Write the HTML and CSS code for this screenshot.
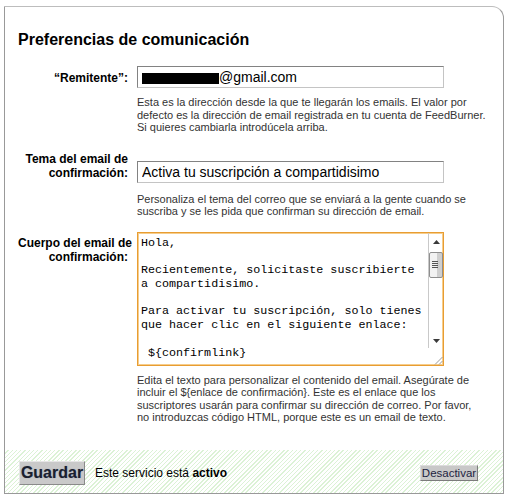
FILE: index.html
```html
<!DOCTYPE html>
<html lang="es">
<head>
  <meta charset="UTF-8">
  <meta name="viewport" content="width=device-width, initial-scale=1.0">
  <title>Preferencias de comunicación</title>
  <link rel="stylesheet" href="styles.css">
</head>
<body>
  <div class="panel">
    <div class="panel-body">
      <h2 class="title">Preferencias de comunicación</h2>

      <div class="row row-sender">
        <div class="lbl">“Remitente”:</div>
        <div class="fld">
          <div class="field"><span class="redacted"></span>@gmail.com</div>
          <p class="help">Esta es la dirección desde la que te llegarán los emails. El valor por defecto es la dirección de email registrada en tu cuenta de FeedBurner.<br>Si quieres cambiarla introdúcela arriba.</p>
        </div>
      </div>

      <div class="row row-subject">
        <div class="lbl">Tema del email de<br>confirmación:</div>
        <div class="fld">
          <input class="field" type="text" value="Activa tu suscripción a compartidisimo">
          <p class="help">Personaliza el tema del correo que se enviará a la gente cuando se suscriba y se les pida que confirman su dirección de email.</p>
        </div>
      </div>

      <div class="row row-body">
        <div class="lbl">Cuerpo del email de<br>confirmación:</div>
        <div class="fld">
          <div class="body-box">
            <textarea class="body-text">Hola,

Recientemente, solicitaste suscribierte
a compartidisimo.

Para activar tu suscripción, solo tienes
que hacer clic en el siguiente enlace:

 ${confirmlink}</textarea>
            <div class="vscroll">
              <div class="sb-track">
                <div class="sb-arrow">
                  <svg width="7" height="4" viewBox="0 0 7 4"><polygon points="3.5,0 7,4 0,4" fill="#3a3a3a"/></svg>
                </div>
                <div class="sb-thumb">
                  <span></span><span></span><span></span><span></span>
                </div>
                <div class="sb-arrow sb-down">
                  <svg width="7" height="4" viewBox="0 0 7 4"><polygon points="0,0 7,0 3.5,4" fill="#3a3a3a"/></svg>
                </div>
              </div>
              <div class="sb-corner">
                <svg width="9" height="9" viewBox="0 0 9 9">
                  <line x1="8.5" y1="1" x2="1" y2="8.5" stroke="#9a9a9a"/>
                  <line x1="8.5" y1="5" x2="5" y2="8.5" stroke="#9a9a9a"/>
                </svg>
              </div>
            </div>
          </div>
          <p class="help">Edita el texto para personalizar el contenido del email. Asegúrate de incluir el ${enlace de confirmación}. Este es el enlace que los suscriptores usarán para confirmar su dirección de correo. Por favor, no introduzcas código HTML, porque este es un email de texto.</p>
        </div>
      </div>
    </div>

    <div class="panel-foot">
      <button class="btn-save" type="button">Guardar</button>
      <span class="status">Este servicio está <b>activo</b></span>
      <button class="btn-off" type="button">Desactivar</button>
    </div>
  </div>
</body>
</html>
```

FILE: styles.css
```css
body {
  margin: 0;
  background-color: #fff;
  font-family: "Liberation Sans", Arial, sans-serif;
  color: #000;
}

.panel {
  box-sizing: border-box;
  width: 500px;
  height: 488px;
  margin: 6px 0 0 4px;
  border: 1px solid #999;
  border-top-color: #bdbdbd;
  border-top-right-radius: 12px;
  display: flex;
  flex-direction: column;
  background-color: #fff;
}

.panel-body {
  flex: 1;
  padding: 23px 0 0 13px;
}

.title {
  margin: 0;
  font-size: 16px;
  line-height: 20px;
  font-weight: bold;
}

.row {
  display: grid;
  grid-template-columns: 110px 352px;
  column-gap: 9px;
  align-items: start;
}

.row-sender { margin-top: 16px; }
.row-sender .lbl { padding-top: 5px; }

.row-subject { margin-top: 18px; }
.row-subject .fld { padding-top: 9px; }
.row-subject .help { margin-top: 10px; }

.row-body { margin-top: 14px; }
.row-body .lbl { padding-top: 4px; }
.row-body .help { width: 345px; }

.lbl {
  text-align: right;
  white-space: nowrap;
  font-size: 12px;
  line-height: 14px;
  font-weight: bold;
}

.field {
  box-sizing: border-box;
  display: block;
  width: 307px;
  height: 22px;
  margin: 0;
  padding: 0 4px;
  border: 1px solid #c4c4c4;
  border-top-color: #828282;
  border-left-color: #828282;
  font-family: "Liberation Sans", Arial, sans-serif;
  font-size: 14px;
  line-height: 20px;
  color: #000;
  background-color: #fff;
}

.redacted {
  display: inline-block;
  width: 77px;
  height: 11px;
  background-color: #000;
  vertical-align: -2px;
}

.help {
  margin: 8px 0 0;
  font-size: 11px;
  line-height: 12.5px;
  color: #333;
}

/* cuerpo del email: caja con barra de desplazamiento estilo XP */
.body-box {
  box-sizing: border-box;
  display: flex;
  width: 307px;
  height: 134px;
  border: 1px solid #e89d32;
  box-shadow: inset 0 0 0 1px #f6cd8c;
  background-color: #fff;
}

.body-text {
  flex: 1;
  margin: 0;
  padding: 4px 0 0 3px;
  border: none;
  outline: none;
  resize: none;
  overflow: hidden;
  background: transparent;
  font-family: "Liberation Mono", "Courier New", monospace;
  font-size: 11.7px;
  line-height: 13.8px;
  color: #000;
  white-space: pre;
}

.vscroll {
  width: 15px;
  display: flex;
  flex-direction: column;
}

.sb-track {
  flex: 1;
  display: flex;
  flex-direction: column;
  border-left: 1px solid #c9c9c9;
}

.sb-arrow {
  height: 18px;
  display: flex;
  align-items: center;
  justify-content: center;
}

.sb-down {
  margin-top: auto;
  height: 14px;
  align-items: flex-start;
  padding-top: 5px;
  box-sizing: border-box;
}

.sb-thumb {
  box-sizing: border-box;
  height: 26px;
  margin: 1px 0 0 0;
  border: 1px solid #8e8e8e;
  border-radius: 2px;
  background: linear-gradient(to right, #f2f2f2 0 60%, #cfcfcf 60% 100%);
  display: flex;
  flex-direction: column;
  justify-content: center;
  gap: 1px;
  padding-left: 2px;
}

.sb-thumb span {
  display: block;
  width: 6px;
  height: 1px;
  background-color: #555;
}

.sb-corner {
  height: 17px;
  display: flex;
  align-items: flex-end;
  justify-content: flex-end;
}

/* pie con rayas verdes */
.panel-foot {
  height: 43px;
  display: flex;
  align-items: center;
  padding: 3px 25px 0 14px;
  box-sizing: border-box;
  background: repeating-linear-gradient(135deg, #fff 0 2px, #dcf2d6 2px 3px);
}

.btn-save {
  box-sizing: border-box;
  width: 66px;
  height: 24px;
  padding: 0;
  border: 1px solid #8a8a8a;
  border-top-color: #e6e6e6;
  border-left-color: #e6e6e6;
  background-color: #c9c9c9;
  font-family: "Liberation Sans", Arial, sans-serif;
  font-size: 16px;
  font-weight: bold;
  color: #1b1f2e;
  text-shadow: 0 0 1px #7a86a8;
}

.status {
  margin-left: 10px;
  font-size: 12px;
}

.btn-off {
  box-sizing: border-box;
  margin-left: auto;
  width: 58px;
  height: 16px;
  padding: 0;
  border: 1px solid #7c7c7c;
  border-top-color: #dcdcdc;
  border-left-color: #dcdcdc;
  background-color: #c8c8c8;
  font-family: "Liberation Sans", Arial, sans-serif;
  font-size: 11.5px;
  line-height: 14px;
  color: #1d2340;
}
```
